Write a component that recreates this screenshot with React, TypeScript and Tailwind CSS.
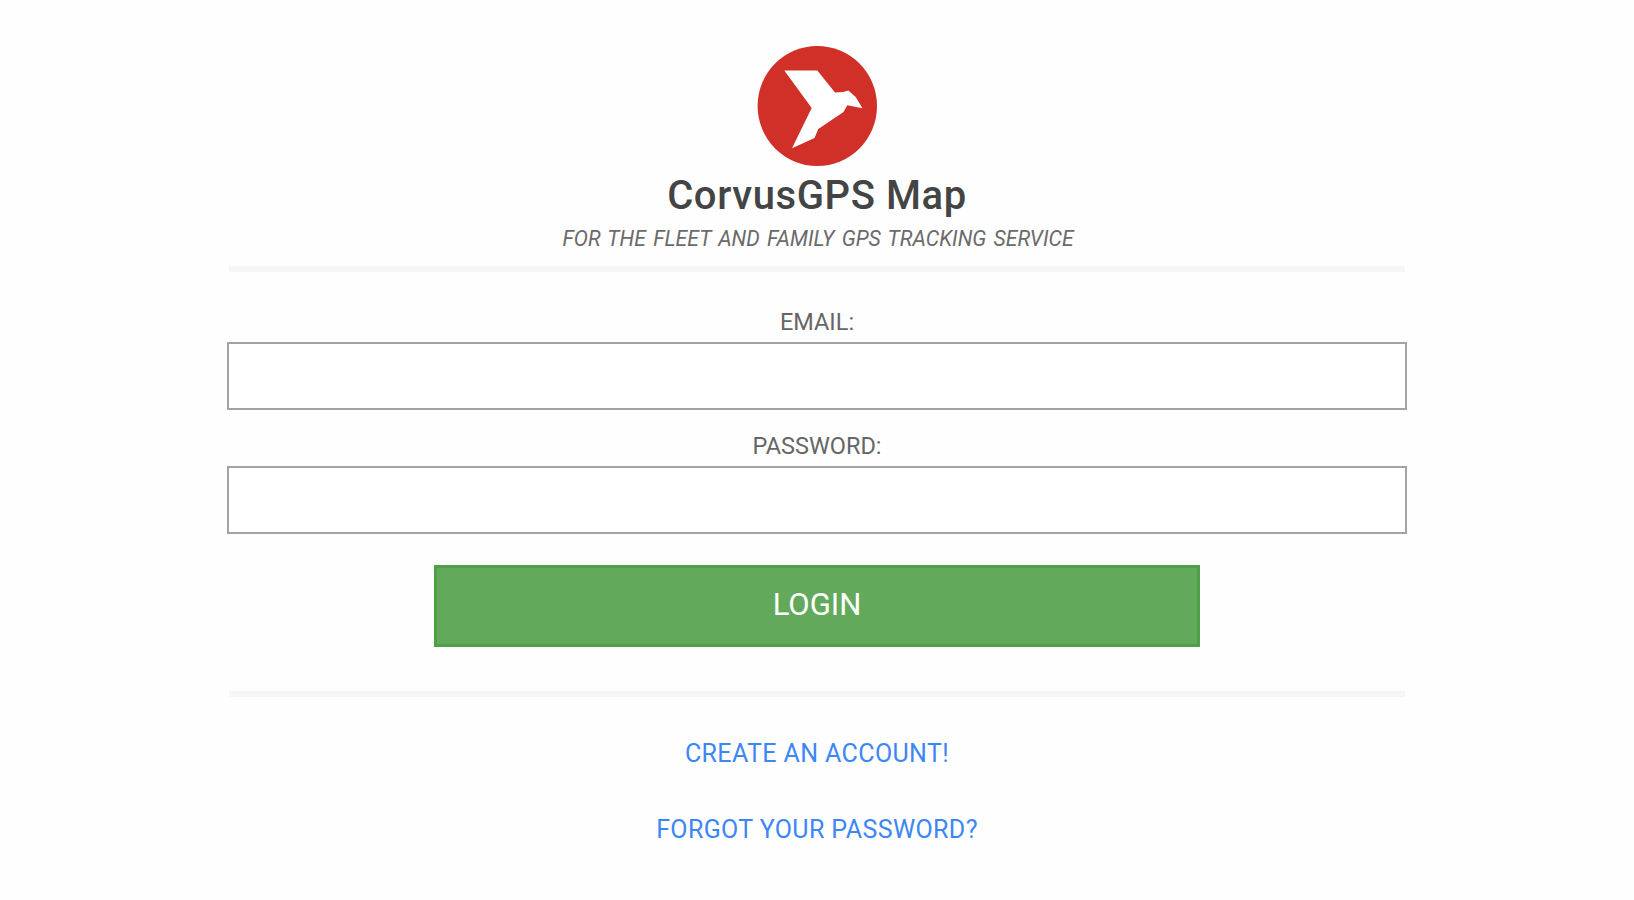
import type { ReactNode } from 'react'

const Logo = () => (
  <svg className="h-[121px] w-[120px]" viewBox="0 0 120 121" role="img" aria-label="CorvusGPS">
    <ellipse cx="60.3" cy="61" rx="59.7" ry="60" fill="#d03027" />
    <path
      d="M27.3 25.6H60.3L78 47.5L86 47L91.3 45.5L98.7 52L105.5 63.3L90.3 60.3L86.5 67L61.3 84L57.5 93L35 103.3L54.7 63Z"
      fill="#fff"
    />
  </svg>
)

const Divider = ({ className }: { className: string }) => (
  <hr className={`h-[6px] w-[1176px] border-0 bg-[#f6f6f6] ${className}`} />
)

const Field = ({ id, label, type, className }: { id: string; label: ReactNode; type: string; className: string }) => (
  <div className={`flex w-[1180px] flex-col items-center ${className}`}>
    <label htmlFor={id} className="h-6 text-[23.5px] leading-6 text-[#666]">
      {label}
    </label>
    <input
      id={id}
      type={type}
      className="mt-2 h-[68px] w-[1180px] border-2 border-[#a3a3a3] bg-white px-4 text-2xl outline-none"
    />
  </div>
)

const App = () => {
  return (
    <main className="flex h-[900px] w-full flex-col items-center overflow-hidden bg-[#fefefe] pt-[45px] font-['Roboto',sans-serif]">
      <Logo />
      <h1 className="mt-[6px] h-12 whitespace-nowrap text-[40px] leading-[48px] font-medium tracking-[0.6px] text-[#444]">
        CorvusGPS Map
      </h1>
      <p className="mt-[7px] h-6 whitespace-nowrap pl-0.5 text-[21.2px] leading-6 [word-spacing:2px] text-[#6a6a6a] italic">
        FOR THE FLEET AND FAMILY GPS TRACKING SERVICE
      </p>
      <Divider className="mt-[15px]" />

      <form className="flex flex-col items-center" onSubmit={(e) => e.preventDefault()}>
        <Field id="email" label="EMAIL:" type="email" className="mt-[38px]" />
        <Field id="password" label="PASSWORD:" type="password" className="mt-[24px]" />
        <button
          type="submit"
          className="mt-[31px] h-[82px] w-[766px] border-3 border-[#4fa045] bg-[#63a95c] pb-0.5 text-[31px] text-white"
        >
          LOGIN
        </button>
      </form>

      <Divider className="mt-11" />

      <nav className="mt-[42px] flex flex-col items-center gap-[46px] text-[25px] leading-[30px] tracking-[0.38px] text-[#3d86f5]">
        <a href="#create">CREATE AN ACCOUNT!</a>
        <a href="#forgot">FORGOT YOUR PASSWORD?</a>
      </nav>
    </main>
  )
}

export default App
